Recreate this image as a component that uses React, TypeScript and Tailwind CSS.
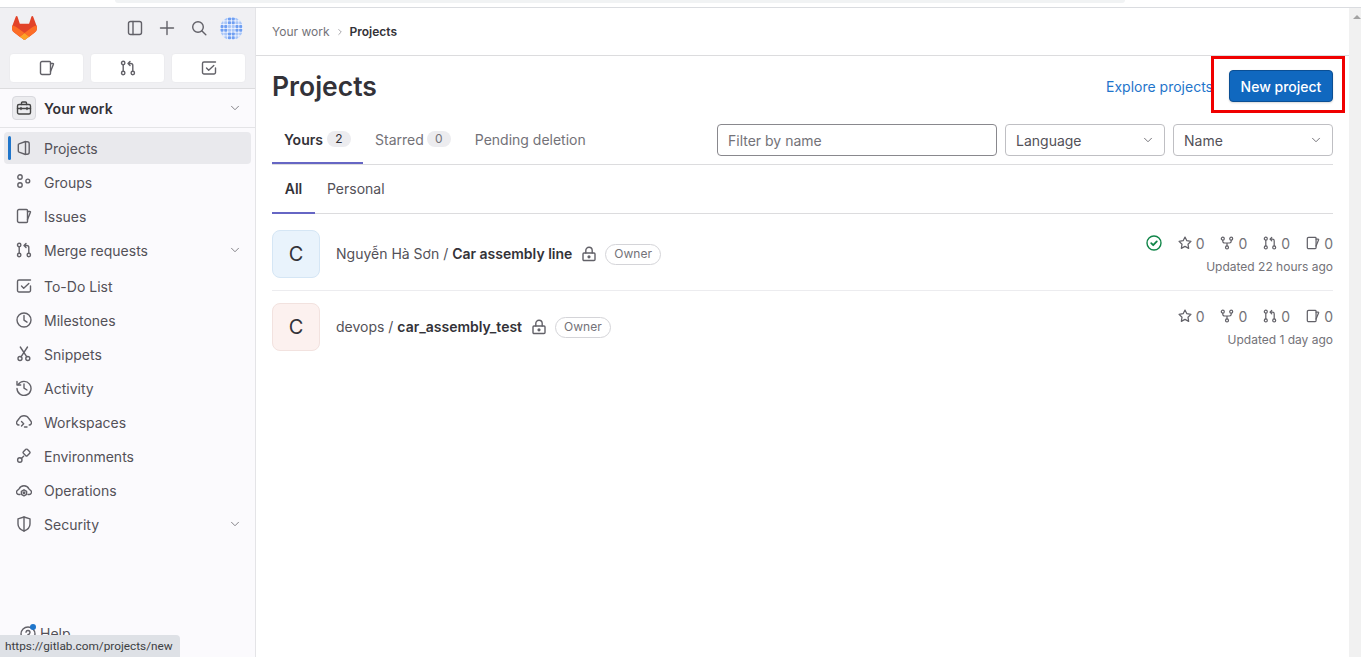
import React from "react";
import { ChevronDown, ChevronRight } from "lucide-react";

type IP = { className?: string; size?: number };
const Svg = ({ className = "", size = 16, children }: IP & { children: React.ReactNode }) => (
  <svg width={size} height={size} viewBox="0 0 16 16" fill="none" stroke="currentColor" strokeWidth={1.4} strokeLinecap="round" strokeLinejoin="round" className={`shrink-0 ${className}`}>
    {children}
  </svg>
);
const IssueI = (p: IP) => (
  <Svg {...p}><path d="M3 1.500h7.500a1 1 0 0 1 1 1v11a1 1 0 0 1-1 1H3a1.500 1.500 0 0 1-1.500-1.500V3A1.500 1.500 0 0 1 3 1.500z" /><path d="M11.500 3.500h2.400a.6.6 0 0 1 .55.8L11.500 11.500" /></Svg>
);
const MergeI = (p: IP) => (
  <Svg {...p}><circle cx="3.200" cy="3" r="1.700" /><circle cx="3.200" cy="13" r="1.700" /><circle cx="12.800" cy="13" r="1.700" /><path d="M3.200 4.700v6.600M12.800 11.300V5.500a2 2 0 0 0-2-2H8.500M10 1.500l-2 2 2 2" /></Svg>
);
const TodoI = (p: IP) => (
  <Svg {...p}><path d="M14.500 8v4.500a1.500 1.500 0 0 1-1.500 1.500H3a1.500 1.500 0 0 1-1.500-1.500v-9A1.500 1.500 0 0 1 3 2h11.500" /><path d="M5.500 8l2.200 2.200L12.800 5.500" /></Svg>
);
const ProjectI = (p: IP) => (
  <Svg {...p}><path d="M9.500 1.500 3 3.900a1 1 0 0 0-.7 1v6.200a1 1 0 0 0 .7 1l6.500 2.400zM9.500 1.800h1.700a2 2 0 0 1 2 2v8.400a2 2 0 0 1-2 2H9.500" /></Svg>
);
const GroupI = (p: IP) => (
  <Svg {...p}><circle cx="4" cy="3" r="2.200" /><circle cx="4" cy="11" r="2.200" /><circle cx="11.800" cy="7" r="1.900" /></Svg>
);
const ClockI = (p: IP) => (
  <Svg {...p}><circle cx="8" cy="8" r="7" /><path d="M8 3.500v4.700l3 2" /></Svg>
);
const SnippetI = (p: IP) => (
  <Svg {...p}><circle cx="4" cy="12.500" r="2" /><circle cx="11.800" cy="12.500" r="2" /><path d="M5 10.800 11.500 1M10.800 10.800 4.300 1" /></Svg>
);
const ActivityI = (p: IP) => (
  <Svg {...p}><path d="M2.200 4.500A7 7 0 1 1 1 8.500" /><path d="M1 1.500v3.500h3.700M8 4v4.200l3 1.800" /></Svg>
);
const WorkspaceI = (p: IP) => (
  <Svg {...p}><path d="M3 11H2.800A2.300 2.300 0 0 1 .9 7.500L3.200 4.500A5.500 5.500 0 0 1 12.800 4.500l2.300 3A2.300 2.300 0 0 1 13.200 11" /><path d="M5.500 7.500l2.200 2.200-2.200 2.200M8.500 13h2.500" /></Svg>
);
const EnvI = (p: IP) => (
  <Svg {...p}><rect x="7.800" y="1.800" width="5.500" height="5.500" rx="1" transform="rotate(45 10.550 4.550)" /><circle cx="3.800" cy="12" r="2.200" /><path d="M5.400 10.400 7.600 8.300" /></Svg>
);
const OpsI = (p: IP) => (
  <Svg {...p}><path d="M4 12.500H2.800A2.300 2.300 0 0 1 1.300 8.500L3 7a5.500 5.500 0 0 1 10 0l1.700 1.500a2.300 2.300 0 0 1-1.500 4H12" /><path d="M8 7.800l2.600 1.500v3L8 13.800l-2.600-1.500v-3z" /><circle cx="8" cy="10.800" r=".8" fill="currentColor" /></Svg>
);
const ShieldI = (p: IP) => (
  <Svg {...p}><path d="M8 1 14 2.800v5.200c0 3.300-2.600 5.700-6 7-3.400-1.300-6-3.700-6-7V2.800z" /><path d="M8 1v14" /></Svg>
);
const PanelI = (p: IP) => (
  <Svg {...p}><rect x="1.500" y="1.500" width="13" height="13" rx="2" /><path d="M6 1.500v13" /></Svg>
);
const PlusI = (p: IP) => (
  <Svg {...p}><path d="M8 1.500v13M1.500 8h13" /></Svg>
);
const SearchI = (p: IP) => (
  <Svg {...p}><circle cx="7" cy="7" r="5.300" /><path d="m11 11 3.800 3.800" /></Svg>
);
const BriefcaseI = (p: IP) => (
  <Svg {...p}><rect x="1.500" y="4.500" width="13" height="9.500" rx="1.500" /><path d="M5.500 4.500V3a1 1 0 0 1 1-1h3a1 1 0 0 1 1 1v1.500M1.500 8.500h13M5 7.500v2M11 7.500v2" /></Svg>
);
const StarI = (p: IP) => (
  <Svg {...p}><path d="m8 1.200 2.100 4.200 4.700.7-3.400 3.300.8 4.700L8 11.900l-4.200 2.200.8-4.700L1.200 6.100l4.700-.7z" /></Svg>
);
const ForkI = (p: IP) => (
  <Svg {...p}><circle cx="3.200" cy="3" r="1.700" /><circle cx="12.800" cy="3" r="1.700" /><circle cx="8" cy="13" r="1.700" /><path d="M3.200 4.700V6a2 2 0 0 0 2 2h5.600a2 2 0 0 0 2-2V4.700M8 8v3.300" /></Svg>
);
const LockI = (p: IP) => (
  <Svg {...p}><rect x="2" y="7" width="12" height="7.500" rx="1" /><path d="M4.800 7V4.500a3.200 3.200 0 0 1 6.400 0V7" /><circle cx="8" cy="10.800" r=".9" fill="currentColor" /></Svg>
);
const StatusI = (p: IP) => (
  <Svg {...p}><circle cx="8" cy="8" r="7" /><path d="m5.200 8.200 2 2 3.600-3.800" strokeWidth={1.800} /></Svg>
);
const HelpI = (p: IP) => (
  <Svg {...p}><circle cx="8" cy="8" r="7" /><path d="M6 6.200A2 2 0 1 1 8 8.500V9.500M8 12v.1" /></Svg>
);

const Tanuki = () => (
  <svg width="25" height="24" viewBox="0 0 25 24" className="shrink-0">
    <path d="m24.507 9.5-.034-.09L21.082.562a.896.896 0 0 0-1.694.091l-2.29 7.01H7.825L5.535.653a.898.898 0 0 0-1.694-.09L.451 9.411.416 9.5a6.297 6.297 0 0 0 2.09 7.278l.012.01.03.022 5.16 3.867 2.56 1.935 1.554 1.176a1.051 1.051 0 0 0 1.268 0l1.555-1.176 2.56-1.935 5.197-3.89.014-.01A6.297 6.297 0 0 0 24.507 9.5Z" fill="#E24329" />
    <path d="m24.507 9.5-.034-.09a11.44 11.44 0 0 0-4.56 2.051l-7.447 5.632 4.742 3.584 5.197-3.89.014-.01A6.297 6.297 0 0 0 24.507 9.5Z" fill="#FC6D26" />
    <path d="m7.707 20.677 2.56 1.935 1.555 1.176a1.051 1.051 0 0 0 1.268 0l1.555-1.176 2.56-1.935-4.743-3.584-4.755 3.584Z" fill="#FCA326" />
    <path d="M5.01 11.461a11.43 11.43 0 0 0-4.56-2.05L.416 9.5a6.297 6.297 0 0 0 2.09 7.278l.012.01.03.022 5.16 3.867 4.745-3.584-7.444-5.632Z" fill="#FC6D26" />
  </svg>
);

const Identicon = () => {
  const cells: React.ReactNode[] = [];
  for (let y = 0; y < 6; y++) {
    for (let x = 0; x < 6; x++) {
      const strong = (x === 2 || x === 3) !== (y === 2 || y === 3);
      cells.push(<rect key={`${x}-${y}`} x={0.5 + x * 3.9} y={0.5 + y * 3.9} width={3.2} height={3.2} rx={0.8} fill={strong ? "#6f9ff2" : "#a9c6f7"} />);
    }
  }
  return (
    <svg width="23" height="23" viewBox="0 0 24 24" className="shrink-0">
      <defs><clipPath id="idc"><circle cx="12" cy="12" r="12" /></clipPath></defs>
      <g clipPath="url(#idc)"><rect width="24" height="24" fill="#f1f5fe" />{cells}</g>
    </svg>
  );
};

const navItems: { label: string; Icon: (p: IP) => React.ReactElement; chevron?: boolean; active?: boolean; mt?: boolean }[] = [
  { label: "Projects", Icon: ProjectI, active: true },
  { label: "Groups", Icon: GroupI },
  { label: "Issues", Icon: IssueI },
  { label: "Merge requests", Icon: MergeI, chevron: true },
  { label: "To-Do List", Icon: TodoI, mt: true },
  { label: "Milestones", Icon: ClockI },
  { label: "Snippets", Icon: SnippetI },
  { label: "Activity", Icon: ActivityI },
  { label: "Workspaces", Icon: WorkspaceI },
  { label: "Environments", Icon: EnvI },
  { label: "Operations", Icon: OpsI },
  { label: "Security", Icon: ShieldI, chevron: true },
];

function Sidebar() {
  return (
    <aside className="relative flex h-full w-[256px] shrink-0 flex-col border-r border-[#e4e4e7] bg-[#fbfafd]">
      <div className="h-[81px] shrink-0 border-b border-[#dcdcde] bg-[#f0f0f3] px-[8px]">
        <div className="flex h-[40px] items-center">
          <div className="ml-[4px]"><Tanuki /></div>
          <div className="ml-[90px] flex items-center text-[#626168]">
            <PanelI />
            <PlusI className="ml-[16px]" />
            <SearchI className="ml-[16px]" />
            <div className="ml-[13px]"><Identicon /></div>
          </div>
        </div>
        <div className="mt-[5px] flex gap-[6px] pl-[1px] pr-[1px]">
          {[IssueI, MergeI, TodoI].map((I, i) => (
            <div key={i} className="flex h-[30px] w-[75px] items-center justify-center rounded-[4px] border border-[#ececef] bg-white text-[#626168]"><I /></div>
          ))}
        </div>
      </div>
      <div className="flex h-[39px] shrink-0 items-center border-b border-[#e4e4e7] pl-[12px] pr-[13px]">
        <div className="flex h-[24px] w-[24px] items-center justify-center rounded-[4px] border border-[#d9d9de] bg-[#ececef] text-[#444]"><BriefcaseI /></div>
        <span className="ml-[8px] flex-1 text-[14px] font-semibold text-[#333238]">Your work</span>
        <ChevronDown size={14} strokeWidth={1.5} className="text-[#737278]" />
      </div>
      <nav className="flex flex-col gap-[2px] px-[4px] pt-[4px]">
        {navItems.map(({ label, Icon, chevron, active, mt }) => (
          <div key={label} className={`relative flex h-[32px] w-[247px] items-center rounded-[4px] pl-[12px] pr-[9px] text-[14px] text-[#535158] ${active ? "bg-[#e9e9ed]" : ""} ${mt ? "mt-[2px]" : ""}`}>
            {active && <span className="absolute left-[4px] top-[4px] h-[24px] w-[3px] rounded-[2px] bg-[#1f75cb]" />}
            <Icon className="text-[#626168]" />
            <span className="ml-[12px] flex-1">{label}</span>
            {chevron && <ChevronDown size={14} strokeWidth={1.5} className="text-[#737278]" />}
          </div>
        ))}
      </nav>
      <div className="mt-auto flex items-center pb-[13px] pl-[20px] text-[14px] text-[#535158]">
        <div className="relative">
          <HelpI className="text-[#626168]" />
          <span className="absolute -top-[2px] right-0 h-[6px] w-[6px] rounded-full bg-[#1f75cb]" />
        </div>
        <span className="ml-[4px]">Help</span>
      </div>
    </aside>
  );
}

function Stat({ Icon, n, className = "" }: { Icon: (p: IP) => React.ReactElement; n: number; className?: string }) {
  return (
    <span className={`flex items-center text-[14px] text-[#737278] ${className}`}>
      <Icon className="text-[#626168]" size={14} />
      <span className="ml-[4px]">{n}</span>
    </span>
  );
}

function Row({ ns, name, bg, border, status, updated, first }: { ns: string; name: string; bg: string; border: string; status?: boolean; updated: string; first?: boolean }) {
  return (
    <div className={`flex items-center justify-between ${first ? "h-[77px] border-b border-[#ececef] pt-[4px]" : "h-[72px]"}`}>
      <div className="flex items-center">
        <div className={`flex h-[48px] w-[48px] items-center justify-center rounded-[8px] border text-[20px] text-[#333238] ${bg} ${border}`}>C</div>
        <div className="ml-[16px] pb-[2px] text-[14px] text-[#535158]">
          {ns} / <span className="font-semibold text-[#333238]">{name}</span>
        </div>
        <LockI className="ml-[9px] text-[#626168]" size={16} />
        <span className="ml-[8px] flex h-[21px] items-center rounded-full border border-[#d4d4d8] bg-white px-[8px] text-[12px] text-[#737278]">Owner</span>
      </div>
      <div className="flex flex-col items-end gap-[5px] pb-[1px]">
        <div className="flex items-center">
          {status && <StatusI className="mr-[16px] text-[#108548]" size={16} />}
          <Stat Icon={StarI} n={0} />
          <Stat Icon={ForkI} n={0} className="ml-[16px]" />
          <Stat Icon={MergeI} n={0} className="ml-[16px]" />
          <Stat Icon={IssueI} n={0} className="ml-[16px]" />
        </div>
        <span className="text-[12px] leading-[16px] text-[#737278]">{updated}</span>
      </div>
    </div>
  );
}

function Select({ label }: { label: string }) {
  return (
    <div className="flex h-[32px] w-[160px] items-center justify-between rounded-[4px] border border-[#bfbfc3] bg-white pl-[10px] pr-[9px] text-[14px] text-[#535158]">
      {label}
      <ChevronDown size={14} strokeWidth={1.5} className="text-[#626168]" />
    </div>
  );
}

export default function App() {
  return (
    <div className="relative flex h-[657px] w-[1361px] flex-col overflow-hidden bg-white font-['Inter',sans-serif] text-[14px]">
      <div className="h-[8px] shrink-0 border-b border-[#dadce0] bg-white">
        <div className="ml-[115px] h-[3px] w-[1010px] rounded-b-full bg-[#f1f3f4]" />
      </div>
      <div className="flex min-h-0 flex-1">
        <Sidebar />
        <main className="min-w-0 flex-1 px-[16px]">
          <div className="-mx-[16px] flex h-[48px] items-center border-b border-[#dcdcde] px-[16px] text-[12px]">
            <span className="text-[#737278]">Your work</span>
            <ChevronRight size={10} strokeWidth={1.5} className="mx-[5px] text-[#737278]" />
            <span className="font-semibold text-[#333238]">Projects</span>
          </div>
          <div className="flex h-[67px] items-start justify-between pt-[14px]">
            <h1 className="flex h-[32px] items-center text-[26.5px] font-semibold leading-none text-[#333238]">Projects</h1>
            <div className="flex h-[32px] items-center">
              <span className="pt-[1px] text-[14px] text-[#1f75cb]">Explore projects</span>
              <button className="ml-[16px] flex h-[32px] w-[104px] items-center justify-center rounded-[4px] border border-[#0b4f94] bg-[#1068bf] text-[14px] font-medium text-white shadow-[0_1px_2px_rgba(0,0,0,0.15)]">New project</button>
            </div>
          </div>
          <div className="flex h-[42px] items-start justify-between border-b border-[#dcdcde] pt-[1px]">
            <div className="-mt-[1px] flex h-[41px] items-start text-[14px]">
              <div className="flex h-[41px] w-[91px] items-center border-b-2 border-[#6666c4] pb-[7px] pl-[12px]">
                <span className="font-semibold text-[#333238]">Yours</span>
                <span className="ml-[4px] flex h-[16px] w-[24px] items-center justify-center rounded-full bg-[#ececef] text-[12px] text-[#333238]">2</span>
              </div>
              <div className="flex h-[41px] items-center pb-[9px] pl-[12px] text-[#737278]">
                <span>Starred</span>
                <span className="ml-[3px] flex h-[16px] w-[24px] items-center justify-center rounded-full bg-[#ececef] text-[12px] text-[#737278]">0</span>
              </div>
              <span className="ml-[24px] flex h-[41px] items-center pb-[9px] text-[#737278]">Pending deletion</span>
            </div>
            <div className="flex gap-[8px]">
              <div className="flex h-[32px] w-[280px] items-center rounded-[4px] border border-[#89888d] bg-white pl-[10px] text-[14px] text-[#737278]">Filter by name</div>
              <Select label="Language" />
              <Select label="Name" />
            </div>
          </div>
          <div className="flex h-[49px] items-center border-b border-[#dcdcde] text-[14px]">
            <div className="flex h-[49px] w-[43px] items-center justify-center border-b-2 border-[#6666c4] font-semibold text-[#333238]">All</div>
            <span className="ml-[12px] pb-[2px] text-[#535158]">Personal</span>
          </div>
          <Row ns="Nguyễn Hà Sơn" name="Car assembly line" bg="bg-[#e9f3fc]" border="border-[#d5e6f5]" status updated="Updated 22 hours ago" first />
          <Row ns="devops" name="car_assembly_test" bg="bg-[#fcf1ef]" border="border-[#f2e2df]" updated="Updated 1 day ago" />
        </main>
        <div className="flex w-[12px] shrink-0 justify-end bg-[#f1f1f1] pt-[7px]">
          <div className="h-0 w-0 border-x-[4px] border-b-[4px] border-x-transparent border-b-[#a3a3a3]" />
        </div>
      </div>
      <div className="absolute left-[1211px] top-[56px] h-[57px] w-[134px] border-[3px] border-[#f00000]" />
      <div className="absolute bottom-0 left-0 flex h-[22px] w-[180px] items-center rounded-tr-[4px] bg-[#dee1e6] pl-[5px] pt-[1px] font-['Roboto',sans-serif] text-[11.8px] text-[#3c4043]">https://gitlab.com/projects/new</div>
    </div>
  );
}
